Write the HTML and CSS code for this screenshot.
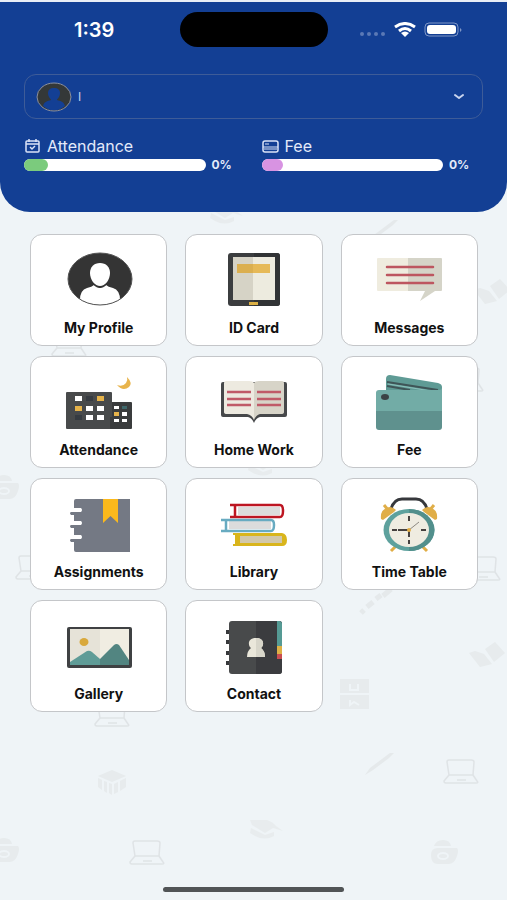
FILE: index.html
```html
<!DOCTYPE html>
<html lang="en">
<head>
    <meta charset="UTF-8">
    <meta name="viewport" content="width=device-width, initial-scale=1.0">
    <title>Student Dashboard</title>
    <link rel="stylesheet" href="styles.css">
</head>
<body>

    <!-- School doodles behind the page -->
    <svg class="doodles" viewBox="0 0 507 900" preserveAspectRatio="xMidYMin slice" aria-hidden="true">
        <defs>
            <g id="laptop" fill="none" stroke="#d9dddf" stroke-width="1.5" stroke-linejoin="round">
                <path d="M-12 5 L-14 -8 Q-14 -10 -12 -10 H10 Q13 -10 13 -8 L12 5 Z"/>
                <path d="M-12 5 L-17 11 Q-17 13 -15 13 H15 Q18 13 16 11 L12 5 M-4 10 H5"/>
            </g>
            <g id="cap" fill="#e6eaeb">
                <path d="M-15 -9 H2 Q8 -7 11 -3 L18 2 L8 -1 L0 4 L-13 -4 Z"/>
                <path d="M-14 -1 L0 6 L9 3 V7 Q0 12 -10 7 L-15 4 Z"/>
            </g>
            <g id="book" fill="#e4e8e9">
                <path d="M-18 -5 L-12 -7 L-3 -4 L5 6 L-7 9 Z"/>
                <path d="M-2 -9 L8 -16 L18 -5 L7 4 Z"/>
            </g>
            <g id="bag" fill="#e4e8e9">
                <path d="M-9 -6 Q-7 -12 0 -12 Q7 -12 8 -6 Z"/>
                <path fill-rule="evenodd" d="M-12 3 Q-12 -4 -5 -4 H14 Q16 -2 14 4 Q11 13 4 12 H-5 Q-12 12 -12 3 Z M-6 4 A6 4 0 0 0 6 4 A6 4 0 0 0 -6 4 Z"/>
                <ellipse cx="0" cy="4" rx="4" ry="2"/>
            </g>
            <g id="pen" fill="#e1e5e6">
                <path d="M-15 12 L-10 5 L6 -7 L10 -10 H14 L9 -5 L-7 7 Z"/>
            </g>
        </defs>
        <use href="#laptop" x="69" y="343"/>
        <use href="#laptop" x="112" y="713"/>
        <use href="#laptop" x="33" y="566"/>
        <use href="#laptop" x="483" y="567"/>
        <use href="#laptop" x="466" y="378"/>
        <use href="#laptop" x="461" y="770"/>
        <use href="#laptop" x="147" y="851"/>
        <use href="#cap" x="265" y="829"/>
        <use href="#cap" x="225" y="214"/>
        <use href="#cap" x="263" y="466"/>
        <use href="#book" x="487" y="658"/>
        <use href="#book" x="492" y="295"/>
        <use href="#pen" x="380" y="763"/>
        <use href="#pen" x="384" y="230"/>
        <use href="#bag" x="4" y="487"/>
        <use href="#bag" x="4" y="850"/>
        <use href="#bag" x="443" y="852"/>
        <path d="M361 613 l3 -3 M367 607 l6 -5 M376 599 l5 -4 M383 596 l8 -7" stroke="#e1e5e6" stroke-width="5" fill="none"/>
        <path fill="#e4e8e9" d="M340 679 H369 V693 H340 Z M340 695 H369 V709 H340 Z"/>
        <path d="M350 684 v6 h8 v-6 M350 700 v5 l4 -3 l5 3" stroke="#eff4f7" stroke-width="2" fill="none"/>
        <path fill="#e4e8e9" d="M98 776 L112 770 L126 776 L112 782 Z M98 778 l4 2 v10 l-4 -3 Z M104 781 l3 1 v11 l-3 -2 Z M109 783 l3 1 v11 l-3 -2 Z M114 784 l4 -2 v10 l-4 2 Z M120 781 l6 -3 v9 l-6 4 Z"/>
    </svg>

    <header class="header">
        <div class="status-bar">
            <span class="time">1:39</span>
            <span class="island"></span>
            <svg class="status-icons" width="104" height="16" viewBox="0 0 104 16" aria-hidden="true">
                <g fill="#5b79b5">
                    <circle cx="3" cy="12" r="2"/>
                    <circle cx="10" cy="12" r="2"/>
                    <circle cx="17" cy="12" r="2"/>
                    <circle cx="24" cy="12" r="2"/>
                </g>
                <g fill="none" stroke="#fff" stroke-width="3">
                    <path d="M36 5 Q46 -2 56 5"/>
                    <path d="M40 9 Q46 4 52 9"/>
                </g>
                <path fill="#fff" d="M42 11 Q46 8 50 11 L46 15 Z"/>
                <rect x="66" y="1" width="33" height="13" rx="4" fill="none" stroke="#7f97c7"/>
                <rect x="68" y="3" width="29" height="9" rx="3" fill="#fff"/>
                <path d="M101 6 Q104 8 101 10 Z" fill="#7f97c7"/>
            </svg>
        </div>

        <div class="student-picker">
            <svg class="avatar" width="36" height="30" viewBox="0 0 36 30" aria-hidden="true">
                <ellipse cx="18" cy="15" rx="17" ry="14" fill="#343838"/>
                <path fill="#133f94" d="M18 6 C22 6 24 8 24 11 C24 15 21 17 21 18 C25 19 28 20 29 24 Q18 33 7 24 C8 20 11 19 15 18 C15 17 12 15 12 11 C12 8 14 6 18 6 Z"/>
                <ellipse cx="18" cy="15" rx="17" ry="14" fill="none" stroke="#8a90a0"/>
            </svg>
            <select class="student-select" aria-label="Student">
                <option>I</option>
            </select>
            <svg class="chevron" width="12" height="8" viewBox="0 0 12 8" aria-hidden="true">
                <path d="M2 2 L6 5 L10 2" fill="none" stroke="#c9d4ee" stroke-width="2" stroke-linecap="round" stroke-linejoin="round"/>
            </svg>
        </div>

        <div class="stats">
            <div class="stat">
                <div class="stat-title">
                    <svg width="17" height="14" viewBox="0 0 17 14" fill="none" stroke="#dbe4f7" stroke-width="1.5" aria-hidden="true">
                        <rect x="2" y="2" width="13" height="11" rx="1"/>
                        <path d="M2 5 H15 M5 0 V3 M12 0 V3 M6 8 L8 10 L11 7"/>
                    </svg>
                    <span id="attendance-label">Attendance</span>
                </div>
                <div class="stat-row">
                    <div class="bar" role="progressbar" aria-labelledby="attendance-label" aria-valuenow="0">
                        <div class="fill green"></div>
                    </div>
                    <span class="percent">0%</span>
                </div>
            </div>
            <div class="stat">
                <div class="stat-title">
                    <svg width="17" height="14" viewBox="0 0 17 14" fill="none" stroke="#dbe4f7" stroke-width="1.5" aria-hidden="true">
                        <rect x="1" y="2" width="15" height="11" rx="2"/>
                        <path d="M1 8 H16 M3 5 H7 M2 10 H15" stroke-width="1"/>
                    </svg>
                    <span id="fee-label">Fee</span>
                </div>
                <div class="stat-row">
                    <div class="bar" role="progressbar" aria-labelledby="fee-label" aria-valuenow="0">
                        <div class="fill pink"></div>
                    </div>
                    <span class="percent">0%</span>
                </div>
            </div>
        </div>
    </header>

    <!-- Menu -->
    <main class="menu">
        <a class="card" href="#profile">
            <svg class="icon" viewBox="0 0 70 60" aria-hidden="true">
                <clipPath id="profile-clip"><ellipse cx="36" cy="30" rx="32" ry="26"/></clipPath>
                <ellipse cx="36" cy="30" rx="32" ry="26" fill="#343434"/>
                <g clip-path="url(#profile-clip)" fill="#fff">
                    <path d="M36 14 C42 14 46 18 46 24 C46 31 41 37 36 37 C31 37 26 31 26 24 C26 18 30 14 36 14 Z"/>
                    <path d="M30 36 Q36 42 42 36 Q44 38 49 39 Q56 41 56 51 V60 H16 V51 Q16 41 23 39 Q28 38 30 36 Z"/>
                </g>
                <path d="M29 35 Q36 42 43 35" fill="none" stroke="#343434"/>
                <ellipse cx="36" cy="30" rx="32" ry="26" fill="none" stroke="#555"/>
            </svg>
            <span>My Profile</span>
        </a>
        <a class="card" href="#id-card">
            <svg class="icon" viewBox="0 0 70 60" aria-hidden="true">
                <rect x="9" y="4" width="52" height="53" rx="3" fill="#3b3d3f"/>
                <path d="M35 4 H58 Q61 4 61 7 V54 Q61 57 58 57 H35 Z" fill="#313335"/>
                <rect x="14" y="8" width="21" height="43" fill="#d6d3c6"/>
                <rect x="34" y="8" width="22" height="43" fill="#edebdf"/>
                <rect x="18" y="15" width="16" height="9" fill="#dbaf50"/>
                <rect x="34" y="15" width="17" height="9" fill="#e6b957"/>
                <rect x="30" y="53" width="9" height="3" fill="#dcb045"/>
            </svg>
            <span>ID Card</span>
        </a>
        <a class="card" href="#messages">
            <svg class="icon" viewBox="0 0 70 60" aria-hidden="true">
                <rect x="3" y="9" width="64" height="33" rx="1" fill="#efecdf"/>
                <path d="M34 9 H67 Q68 9 68 10 V41 Q68 42 67 42 H61 L46 52 L51 42 H34 Z" fill="#d5d4c8"/>
                <path d="M13 18 H59 M13 26 H59 M13 34 H59" stroke="#bd5660" stroke-width="2.5" stroke-linecap="round"/>
            </svg>
            <span>Messages</span>
        </a>
        <a class="card" href="#attendance">
            <svg class="icon" viewBox="0 0 70 60" aria-hidden="true">
                <rect x="2" y="21" width="46" height="37" rx="1" fill="#484a4b"/>
                <path d="M48 31 H67 Q68 31 68 32 V57 Q68 58 67 58 H46 V46 H48 Z" fill="#3a3c3d"/>
                <path fill="#fff" d="M11 25 h7 v5 h-7 Z M22 35 h7 v5 h-7 Z M33 35 h7 v5 h-7 Z M22 44 h7 v5 h-7 Z M33 44 h7 v5 h-7 Z M50 35 h5 v3 h-5 Z M58 41 h5 v4 h-5 Z M50 48 h5 v3 h-5 Z M58 48 h5 v3 h-5 Z"/>
                <path fill="#e6b34a" d="M33 25 h7 v5 h-7 Z M11 35 h7 v5 h-7 Z M50 41 h5 v4 h-5 Z"/>
                <path fill="#363b41" d="M22 25 h7 v5 h-7 Z M11 44 h7 v5 h-7 Z"/>
                <path fill="#3f686b" d="M58 35 h5 v3 h-5 Z"/>
                <path fill="#e8b44c" d="M63 6 Q69 12 65 16 Q59 21 53 14 Q59 16 62 12 Q64 9 63 6 Z"/>
            </svg>
            <span>Attendance</span>
        </a>
        <a class="card" href="#home-work">
            <svg class="icon" viewBox="0 0 70 60" aria-hidden="true">
                <path d="M4 11 H66 Q68 11 68 13 V44 Q68 46 66 46 H41 Q37 47 35 52 Q33 47 29 46 H4 Q2 46 2 44 V13 Q2 11 4 11 Z" fill="#46484a"/>
                <path d="M5 12 Q5 10 7 10 H30 Q34 10 35 12 V49 Q33 44 28 43 H8 Q5 43 5 41 Z" fill="#edeae0"/>
                <path d="M35 12 Q36 10 40 10 H63 Q65 10 65 12 V41 Q65 43 62 43 H41 Q37 44 35 49 Z" fill="#d7d4c8"/>
                <path d="M8 21 H32 M8 28 H32 M8 34 H32 M38 21 H62 M38 28 H62 M38 34 H62" stroke="#c05a68" stroke-width="2.5"/>
            </svg>
            <span>Home Work</span>
        </a>
        <a class="card" href="#fee">
            <svg class="icon" viewBox="0 0 70 60" aria-hidden="true">
                <path d="M12 19 V8 Q12 4 16 4 L64 12 Q68 13 68 16 V22 H12 Z" fill="#5f9b95"/>
                <path d="M13 11 L64 19 M13 15 L36 19" stroke="#3f5557" stroke-width="2"/>
                <path d="M14 13 L57 20" stroke="#8cc0bb"/>
                <path d="M5 19 H65 Q68 19 68 16 V40 H2 V22 Q2 19 5 19 Z" fill="#72aca6"/>
                <path d="M2 40 H68 V56 Q68 59 65 59 H5 Q2 59 2 56 Z" fill="#5f918e"/>
                <ellipse cx="11" cy="26" rx="4" ry="3" fill="#3b4345"/>
            </svg>
            <span>Fee</span>
        </a>
        <a class="card" href="#assignments">
            <svg class="icon" viewBox="0 0 70 60" aria-hidden="true">
                <path fill="#747984" d="M12 6 H66 V59 H12 Q10 59 10 57 V49 H7 Q5 47 7 46 H17 Q19 44 17 42 H10 V35 H7 Q5 33 7 32 H17 Q19 30 17 28 H10 V22 H7 Q5 20 7 19 H17 Q19 17 17 15 H10 V8 Q10 6 12 6 Z"/>
                <path fill="#fbb91c" d="M39 6 H54 V30 L46.5 23 L39 30 Z"/>
            </svg>
            <span>Assignments</span>
        </a>
        <a class="card" href="#library">
            <svg class="icon" viewBox="0 0 70 60" aria-hidden="true">
                <rect x="19" y="14" width="42" height="8" fill="#dcdcdc"/>
                <path d="M11 12 H61 Q64 12 64 18 Q64 24 61 24 H11 M16 12 V24" fill="none" stroke="#bd1622" stroke-width="2.5"/>
                <rect x="10" y="28" width="42" height="8" fill="#dcdcdc"/>
                <path d="M2 27 H52 Q55 27 55 32 Q55 38 52 38 H2 M7 27 V38" fill="none" stroke="#68abc1" stroke-width="2.5"/>
                <path d="M14 40 H63 Q68 41 68 47 Q68 53 63 53 H14 V51 H16 V42 H14 Z" fill="#d9b51c"/>
                <rect x="21" y="43" width="42" height="7" fill="#d2c8aa"/>
            </svg>
            <span>Library</span>
        </a>
        <a class="card" href="#time-table">
            <svg class="icon" viewBox="0 0 70 60" aria-hidden="true">
                <path d="M17 16 Q20 6 28 6 H42 Q50 6 53 16" fill="none" stroke="#36383c" stroke-width="3"/>
                <path d="M22 53 L17 58 M48 53 L53 58" stroke="#e0ad45" stroke-width="3"/>
                <path fill="#e0ae48" d="M7 26 Q6 17 13 15 Q17 12 22 17 L20 19 L9 27 Z M63 26 Q64 17 57 15 Q53 12 48 17 L50 19 L61 27 Z"/>
                <path d="M10 12 L15 18 M60 12 L55 18" stroke="#e0ae48" stroke-width="3"/>
                <ellipse cx="35" cy="37" rx="25.5" ry="21" fill="#5ea19d"/>
                <path d="M35 16 A25.5 21 0 0 1 35 58 Z" fill="#528f8c"/>
                <ellipse cx="35" cy="37" rx="20" ry="17" fill="#efece1"/>
                <path d="M35 23 V28 M35 38 V44 M35 47 V51 M18 37 H23 M47 37 H52 M24 37 H35" stroke="#45403e" stroke-width="2"/>
                <path d="M35 37 L45 29" stroke="#8d8982"/>
                <circle cx="35" cy="37" r="2" fill="#e0ad45"/>
            </svg>
            <span>Time Table</span>
        </a>
        <a class="card" href="#gallery">
            <svg class="icon" viewBox="0 0 70 60" aria-hidden="true">
                <rect x="3" y="12" width="65" height="41" rx="2" fill="#3f4143"/>
                <rect x="6" y="14" width="30" height="36" fill="#e6e3d8"/>
                <rect x="36" y="14" width="29" height="36" fill="#f0ede2"/>
                <ellipse cx="20" cy="27" rx="4.5" ry="4" fill="#d9a93c"/>
                <path d="M6 47 L23 36 Q25.5 35 28 37 L36 44 V50 H6 Z" fill="#5f9c97"/>
                <path d="M36 44 L50 30 Q52.5 28 55 30 L65 45 V50 H36 Z" fill="#528581"/>
            </svg>
            <span>Gallery</span>
        </a>
        <a class="card" href="#contact">
            <svg class="icon" viewBox="0 0 70 60" aria-hidden="true">
                <path d="M7 17 H12 M7 27 H12 M7 38 H12 M7 48 H12" stroke="#37393b" stroke-width="4"/>
                <rect x="10" y="6" width="53" height="53" rx="3" fill="#484a4b"/>
                <path d="M37 6 H60 Q63 6 63 9 V56 Q63 59 60 59 H37 Z" fill="#3b3c3f"/>
                <path d="M58 6 H60 Q63 6 63 9 V31 H58 Z" fill="#559a94"/>
                <rect x="58" y="31" width="5" height="8" fill="#deb045"/>
                <rect x="58" y="39" width="5" height="5" fill="#c94d51"/>
                <path d="M37 23 C46 23 45 31 42 33 Q46 36 46 42 H28 Q28 36 32 33 C29 31 28 23 37 23 Z" fill="#eae7da"/>
                <path d="M37 23 C46 23 45 31 42 33 Q46 36 46 42 H37 Z" fill="#d8d6ca"/>
            </svg>
            <span>Contact</span>
        </a>
    </main>

    <div class="home-indicator"></div>

</body>
</html>
```
FILE: styles.css
```css
* {
    box-sizing: border-box;
}
body {
    position: relative;
    display: flex;
    flex-direction: column;
    min-height: 100vh;
    margin: 0;
    background: #eff4f7;
    font-family: Inter, "Liberation Sans", sans-serif;
}
.doodles {
    position: absolute;
    top: 0;
    left: 0;
    z-index: -1;
    width: 100%;
    height: 100%;
    opacity: 0.7;
}

/* Header */
.header {
    padding: 10px 24px 41px;
    border-top: 2px solid #e9eef6;
    border-radius: 0 0 30px 30px;
    background: #133f94;
    color: #e3eafa;
}
.status-bar {
    display: grid;
    grid-template-columns: 1fr auto 1fr;
    align-items: center;
    margin-bottom: 27px;
}
.time {
    padding-left: 50px;
    color: #fff;
    font-size: 20px;
    font-weight: 600;
    line-height: 24px;
}
.island {
    width: 148px;
    height: 35px;
    border-radius: 18px;
    background: #000;
}
.status-icons {
    justify-self: end;
    margin-right: 20px;
}
.student-picker {
    position: relative;
    height: 45px;
    border: 1px solid #3e5c98;
    border-radius: 12px;
}
.avatar {
    position: absolute;
    top: 7px;
    left: 11px;
    pointer-events: none;
}
.student-select {
    width: 100%;
    height: 100%;
    padding: 0 40px 0 53px;
    border: 0;
    border-radius: 12px;
    appearance: none;
    background: transparent;
    color: #c3cfeb;
    font-family: inherit;
    font-size: 12px;
}
.chevron {
    position: absolute;
    top: 18px;
    right: 17px;
    pointer-events: none;
}

/* Attendance and fee progress */
.stats {
    display: grid;
    grid-template-columns: 1fr 1fr;
    gap: 16px;
    margin-top: 18px;
}
.stat-title {
    display: flex;
    align-items: center;
    gap: 6px;
    margin-bottom: 4px;
    font-size: 16px;
    line-height: 18px;
}
.stat-row {
    display: flex;
    align-items: center;
    gap: 6px;
    height: 12px;
}
.bar {
    flex: 1;
    height: 12px;
    border-radius: 6px;
    background: #fff;
}
.fill {
    width: 24px;
    height: 12px;
    border-radius: 6px;
}
.green {
    background: #7bcb7d;
}
.pink {
    width: 21px;
    background: #d893e2;
}
.percent {
    width: 34px;
    font-size: 12px;
    font-weight: 700;
    line-height: 12px;
}

/* Menu cards */
.menu {
    display: grid;
    grid-template-columns: repeat(3, 1fr);
    gap: 10px 18px;
    padding: 22px 29px 22px 30px;
}
.card {
    display: flex;
    flex-direction: column;
    align-items: center;
    gap: 10px;
    padding: 14px 0 8px;
    border: 1px solid #c4c6c9;
    border-radius: 12px;
    background: #fff;
    color: #111;
    font-size: 14px;
    font-weight: 700;
    line-height: 18px;
    text-decoration: none;
}
.icon {
    width: 70px;
    height: 60px;
}
.home-indicator {
    width: 181px;
    height: 5px;
    margin: auto auto 8px;
    border-radius: 3px;
    background: #515456;
}
```
